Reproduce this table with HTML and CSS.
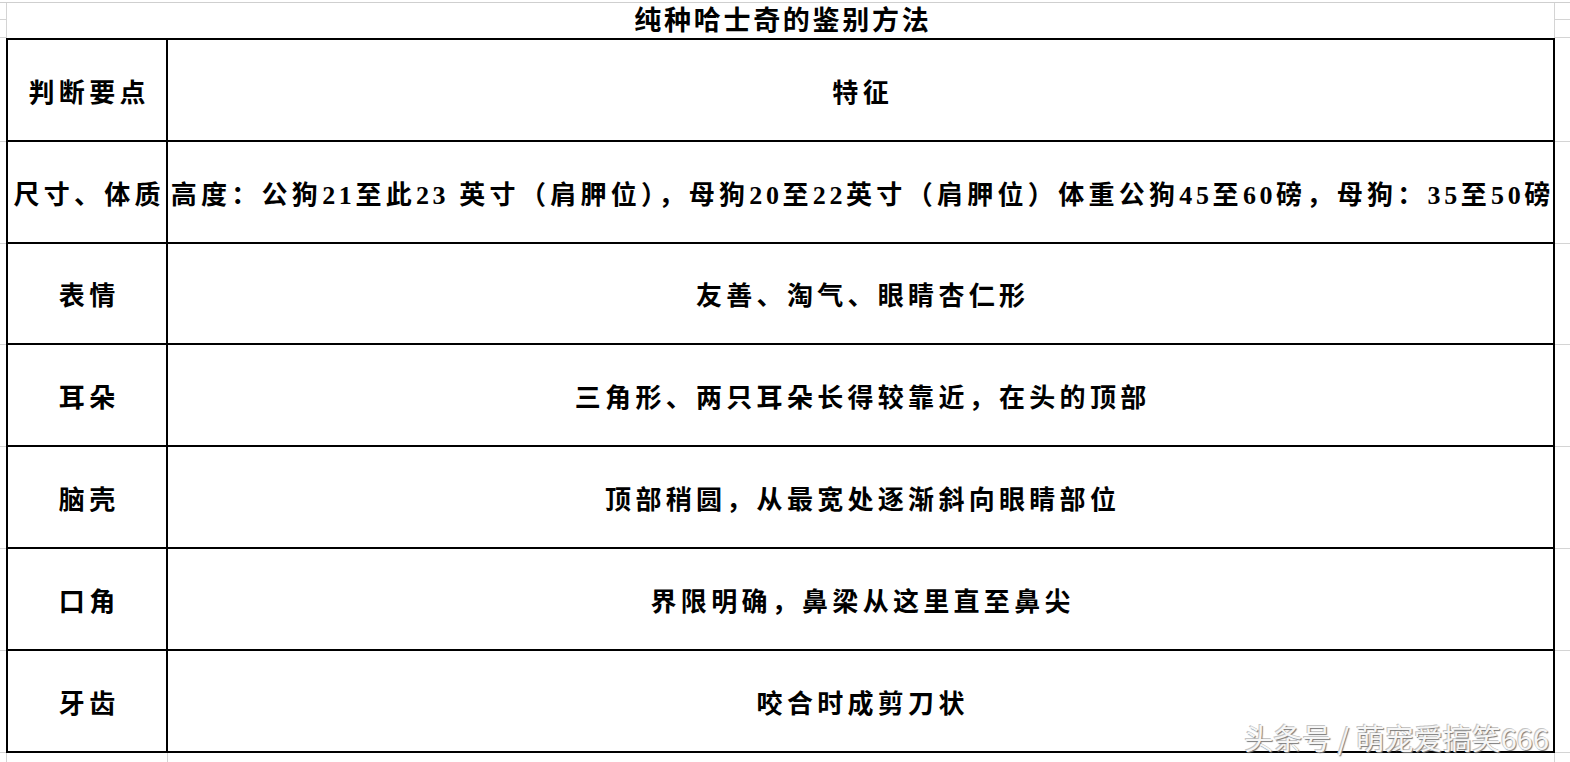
FILE: index.html
```html
<!DOCTYPE html>
<html lang="zh-CN">
<head>
<meta charset="utf-8">
<title>纯种哈士奇的鉴别方法</title>
<link rel="stylesheet" href="styles.css">
</head>
<body>
<div class="sheet">
  <div class="top">
    <div class="gut gut-l"><div class="seg seg-a"></div><div class="seg"></div></div>
    <div class="title"><span class="t">纯种哈士奇的鉴别方法</span></div>
    <div class="gut gut-r"><div class="seg seg-a"></div><div class="seg"></div></div>
  </div>
  <div class="body">
    <div class="gut gut-l">
      <div class="seg r1"></div><div class="seg r1"></div><div class="seg r2"></div><div class="seg r1"></div><div class="seg r1"></div><div class="seg r1"></div><div class="seg r1"></div>
    </div>
    <div class="table">
      <div class="cell key"><span class="t">判断要点</span></div>
      <div class="cell val"><span class="t">特征</span></div>
      <div class="cell key"><span class="t">尺寸、体质</span></div>
      <div class="cell val"><span class="t long">高度：公狗<span class="num">21</span>至此<span class="num">23 </span>英寸（肩胛位），母狗<span class="num">20</span>至<span class="num">22</span>英寸（肩胛位）体重公狗<span class="num">45</span>至<span class="num">60</span>磅，母狗：<span class="num">35</span>至<span class="num">50</span>磅</span></div>
      <div class="cell key"><span class="t">表情</span></div>
      <div class="cell val"><span class="t">友善、淘气、眼睛杏仁形</span></div>
      <div class="cell key"><span class="t">耳朵</span></div>
      <div class="cell val"><span class="t">三角形、两只耳朵长得较靠近，在头的顶部</span></div>
      <div class="cell key"><span class="t">脑壳</span></div>
      <div class="cell val"><span class="t">顶部稍圆，从最宽处逐渐斜向眼睛部位</span></div>
      <div class="cell key"><span class="t">口角</span></div>
      <div class="cell val"><span class="t">界限明确，鼻梁从这里直至鼻尖</span></div>
      <div class="cell key"><span class="t">牙齿</span></div>
      <div class="cell val"><span class="t">咬合时成剪刀状</span></div>
    </div>
    <div class="gut gut-r">
      <div class="seg r1"></div><div class="seg r1"></div><div class="seg r2"></div><div class="seg r1"></div><div class="seg r1"></div><div class="seg r1"></div><div class="seg r1"></div>
    </div>
  </div>
  <div class="bottom">
    <div class="bcol b1"></div>
    <div class="bcol b2"></div>
  </div>
  <div class="watermark">头条号 / 萌宠爱搞笑666</div>
</div>
</body>
</html>
```

FILE: styles.css
```css
html, body {
  margin: 0;
  padding: 0;
  background: #ffffff;
}

.sheet {
  position: relative;
  width: 1570px;
  height: 762px;
  overflow: hidden;
  background: #ffffff;
  font-family: "Liberation Serif", "Noto Sans CJK SC", serif;
  color: #000;
}

.top {
  margin-top: 2px;
  height: 35px;
  border-top: 1px solid #cfcfcf;
  display: flex;
}

.gut {
  display: flex;
  flex-direction: column;
}

.gut-l {
  width: 6px;
}

.gut-r {
  width: 15px;
}

.seg {
  flex: none;
  border-bottom: 1px solid #d4d4d4;
  box-sizing: border-box;
}

.top .seg {
  flex: 1;
}

.top .seg-a {
  flex: none;
  height: 17px;
}

.title {
  width: 1549px;
  box-sizing: border-box;
  border-left: 1px solid #d4d4d4;
  border-right: 1px solid #d4d4d4;
  display: flex;
  justify-content: center;
  align-items: flex-end;
  font-size: 27px;
  font-weight: 700;
  letter-spacing: 2.7px;
  line-height: 34px;
}

.t {
  white-space: nowrap;
  margin-right: -4.3px;
}

.title .t {
  margin-right: -2.7px;
  padding-left: 2px;
}

.body {
  display: flex;
}

.body .seg.r1 {
  height: 102px;
}

.body .seg.r2 {
  height: 101px;
}

.body .gut .seg.r1:first-child {
  height: 104px;
}

.table {
  width: 1549px;
  box-sizing: border-box;
  display: grid;
  grid-template-columns: 160px 1387px;
  grid-template-rows: 102px 102px 101px 102px 102px 102px 102px;
  border-top: 2px solid #000;
  border-left: 2px solid #000;
}

.cell {
  box-sizing: border-box;
  border-right: 2px solid #000;
  border-bottom: 2px solid #000;
  display: flex;
  align-items: center;
  justify-content: center;
  font-size: 26px;
  font-weight: 700;
  letter-spacing: 4.3px;
  overflow: visible;
}

.num {
  letter-spacing: 3.6px;
}

.bottom {
  display: flex;
  height: 20px;
  padding-left: 6px;
}

.bcol {
  box-sizing: border-box;
  height: 100%;
  border-left: 1px solid #d4d4d4;
}

.b1 {
  width: 161px;
}

.b2 {
  width: 1388px;
  border-right: 1px solid #d4d4d4;
}

.watermark {
  position: absolute;
  right: 21px;
  bottom: 8px;
  font-family: "Noto Sans CJK SC", "Noto Sans", sans-serif;
  font-size: 29px;
  font-weight: 400;
  line-height: 34px;
  color: #f6f6f6;
  text-shadow: 1px 1px 1px #7a7a7a, -1px -1px 0 #c4c4c4;
  white-space: nowrap;
}
```
